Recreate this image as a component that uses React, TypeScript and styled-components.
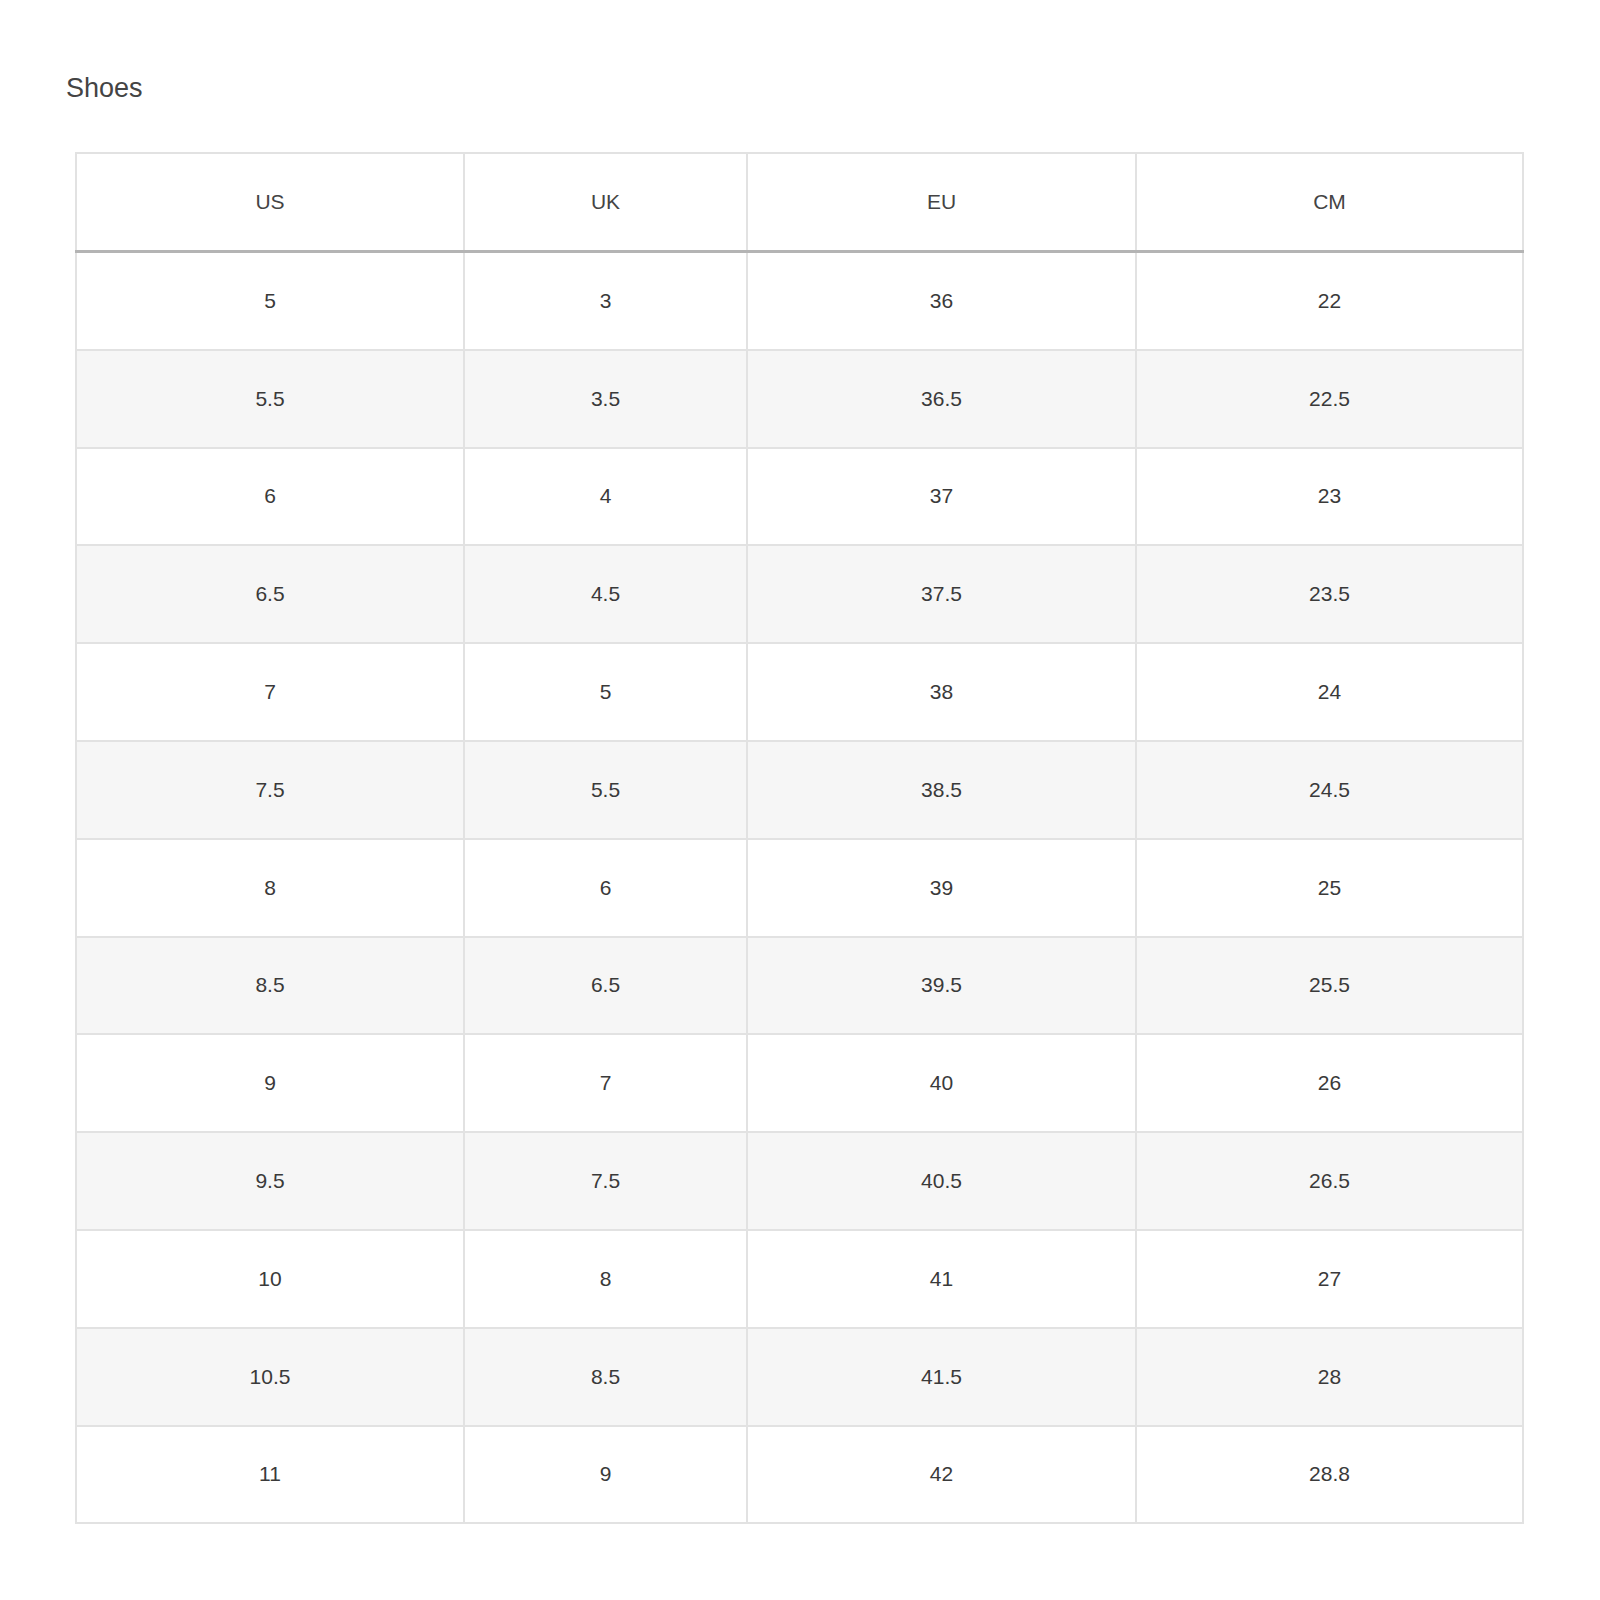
import React from "react";
import styled, { createGlobalStyle } from "styled-components";

const Global = createGlobalStyle`
  body { margin: 0; background: #fff; font-family: "Liberation Sans", Arial, sans-serif; }
`;

const Page = styled.div`
  padding: 73px 76px 0 75px;
  width: 1600px;
  box-sizing: border-box;
`;

const Title = styled.h2`
  margin: 0 0 49px -9px;
  font-size: 27px;
  font-weight: 400;
  color: #444;
  line-height: 30px;
`;

const Table = styled.table`
  width: 1439px;
  border-collapse: collapse;
  border: 2px solid #e2e2e2;
  table-layout: fixed;
`;

const Th = styled.th<{ $w: number }>`
  width: ${(p) => p.$w}px;
  height: 96px;
  font-weight: 400;
  font-size: 21px;
  color: #444;
  border-left: 2px solid #e2e2e2;
  border-bottom: 3px solid #b4b4b4;
  text-align: center;
  vertical-align: middle;
  padding: 0;
`;

const Tr = styled.tr<{ $alt: boolean }>`
  background: ${(p) => (p.$alt ? "#f6f6f6" : "#fff")};
`;

const Td = styled.td`
  height: 95.8px;
  font-size: 21px;
  color: #3a3a3a;
  border-left: 2px solid #e2e2e2;
  border-top: 2px solid #e2e2e2;
  text-align: center;
  vertical-align: middle;
  padding: 0;
`;

const rows = [
  ["5", "3", "36", "22"],
  ["5.5", "3.5", "36.5", "22.5"],
  ["6", "4", "37", "23"],
  ["6.5", "4.5", "37.5", "23.5"],
  ["7", "5", "38", "24"],
  ["7.5", "5.5", "38.5", "24.5"],
  ["8", "6", "39", "25"],
  ["8.5", "6.5", "39.5", "25.5"],
  ["9", "7", "40", "26"],
  ["9.5", "7.5", "40.5", "26.5"],
  ["10", "8", "41", "27"],
  ["10.5", "8.5", "41.5", "28"],
  ["11", "9", "42", "28.8"],
];

const cols: [string, number][] = [
  ["US", 386],
  ["UK", 281],
  ["EU", 387],
  ["CM", 385],
];

export default function App() {
  return (
    <Page>
      <Global />
      <Title>Shoes</Title>
      <Table>
        <thead>
          <tr>
            {cols.map(([c, w]) => (
              <Th key={c} $w={w}>
                {c}
              </Th>
            ))}
          </tr>
        </thead>
        <tbody>
          {rows.map((r, i) => (
            <Tr key={i} $alt={i % 2 === 1}>
              {r.map((v, j) => (
                <Td key={j}>{v}</Td>
              ))}
            </Tr>
          ))}
        </tbody>
      </Table>
    </Page>
  );
}
